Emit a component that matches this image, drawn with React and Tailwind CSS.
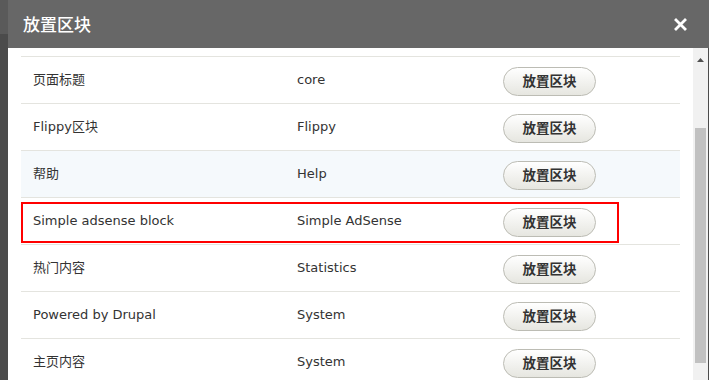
import React from "react";

const rows = [
  { name: "页面标题", module: "core" },
  { name: "Flippy区块", module: "Flippy" },
  { name: "帮助", module: "Help", hover: true },
  { name: "Simple adsense block", module: "Simple AdSense", marked: true },
  { name: "热门内容", module: "Statistics" },
  { name: "Powered by Drupal", module: "System" },
  { name: "主页内容", module: "System" },
];

const font = { fontFamily: '"DejaVu Sans", "Noto Sans CJK SC", sans-serif' };

function PlaceButton() {
  return (
    <button className="h-[29px] w-[93px] rounded-full border border-[#bcbcb4] bg-gradient-to-b from-white to-[#e6e6e0] text-[13.5px] font-bold text-[#333]">
      放置区块
    </button>
  );
}

export default function App() {
  return (
    <div className="flex h-[380px] w-[709px] overflow-hidden bg-[#4b4b4b]" style={font}>
      {/* page behind the dialog */}
      <div className="flex w-[8px] shrink-0 flex-col">
        <div className="h-[34px] bg-[#5a5a5a]" />
        <div className="flex-1 bg-[#4b4b4b]" />
      </div>

      <div className="flex min-h-0 flex-1 flex-col">
        <div className="flex h-[48px] shrink-0 items-center justify-between bg-[#676767] pl-[15px] pr-[22px]">
          <span className="text-[17px] font-medium text-white" style={{ fontFamily: '"Noto Sans CJK SC", sans-serif' }}>
            放置区块
          </span>
          <svg width="13" height="13" viewBox="0 0 13 13" className="mt-[1px]">
            <path d="M2 2 L11 11 M11 2 L2 11" stroke="white" strokeWidth="2.8" strokeLinecap="square" />
          </svg>
        </div>

        <div className="flex min-h-0 flex-1 overflow-hidden bg-white">
          <div className="flex-1 px-[13px] pt-[8px]">
            {rows.map((r) => (
              <div
                key={r.name}
                className={`relative flex h-[47px] shrink-0 items-center border-t border-[#e4e4df] text-[13px] text-[#333] ${r.hover ? "bg-[#f5f9fc]" : "bg-white"}`}
              >
                <div className="w-[264px] pl-[12px]">{r.name}</div>
                <div className="w-[206px] pl-[12px]">{r.module}</div>
                <div className="pl-[12px] pt-[2px]">
                  <PlaceButton />
                </div>
                {r.marked && (
                  <div className="absolute left-0 top-[4px] h-[41px] w-[598px] border-2 border-[#ff0000]" />
                )}
              </div>
            ))}
          </div>

          <div className="flex w-[15px] shrink-0 flex-col bg-[#f1f1f1]">
            <div className="flex h-[17px] items-end justify-center pb-[3px]">
              <svg width="7" height="4" viewBox="0 0 7 4">
                <path d="M0 4 L3.5 0 L7 4 Z" fill="#505050" />
              </svg>
            </div>
            <div className="mt-[63px] ml-[2px] h-[235px] w-[11px] shrink-0 bg-[#c1c1c1]" />
          </div>
          <div className="w-[1px] shrink-0 bg-[#4b4b4b]" />
        </div>
      </div>
    </div>
  );
}
